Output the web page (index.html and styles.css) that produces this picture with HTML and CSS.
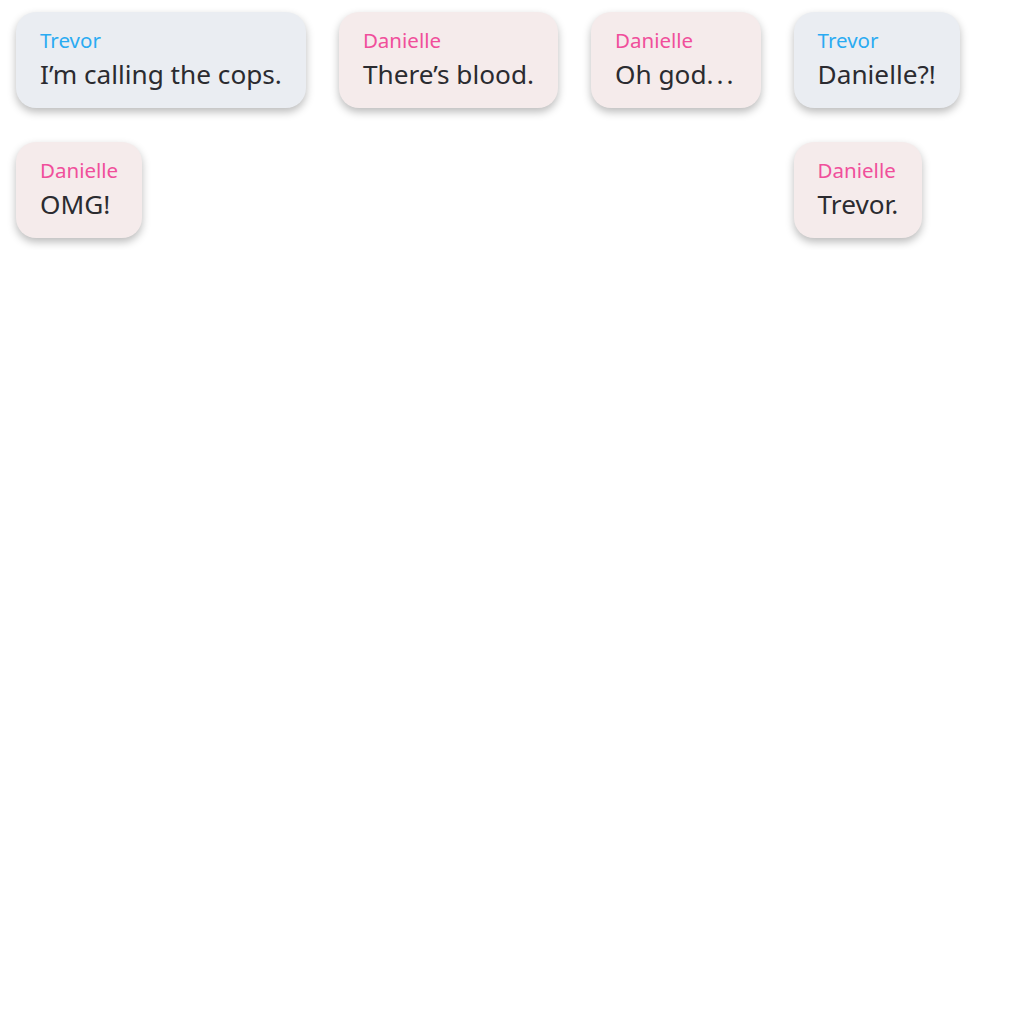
FILE: index.html
```html
<!DOCTYPE html>
<html lang="en">
<head>
<meta charset="utf-8">
<title>Chat</title>
<link rel="stylesheet" href="styles.css">
</head>
<body>
<div class="board">
  <div class="bubble trevor"><div class="name">Trevor</div><div class="msg">I’m calling the cops.</div></div>
  <div class="bubble danielle"><div class="name">Danielle</div><div class="msg">There’s blood.</div></div>
  <div class="bubble danielle"><div class="name">Danielle</div><div class="msg">Oh god<span class="dots">...</span></div></div>
  <div class="bubble trevor"><div class="name">Trevor</div><div class="msg">Danielle?!</div></div>
  <div class="bubble danielle"><div class="name">Danielle</div><div class="msg">OMG!</div></div>
  <div class="bubble danielle col4"><div class="name">Danielle</div><div class="msg">Trevor.</div></div>
</div>
</body>
</html>
```
FILE: styles.css
```css
html, body {
  margin: 0;
  padding: 0;
  background: #ffffff;
}
body {
  font-family: "Noto Sans", Lato, sans-serif;
}
.board {
  display: grid;
  grid-template-columns: repeat(4, max-content);
  column-gap: 33px;
  row-gap: 34px;
  align-items: start;
  justify-items: start;
  padding: 12px 16px;
}
.bubble {
  border-radius: 20px;
  padding: 15px 24px 17px;
  box-shadow: 0 4px 9px rgba(0, 0, 0, 0.27);
}
.col4 {
  grid-column: 4;
}
.trevor {
  background: #eaedf2;
}
.danielle {
  background: #f5ebeb;
}
.name {
  font-size: 20.5px;
  line-height: 26px;
  margin-bottom: 4px;
}
.trevor .name {
  color: #2aabf2;
}
.danielle .name {
  color: #f04f9b;
}
.msg {
  font-size: 26.2px;
  line-height: 34px;
  color: #2b2b30;
}
.dots {
  letter-spacing: 3px;
}
```
